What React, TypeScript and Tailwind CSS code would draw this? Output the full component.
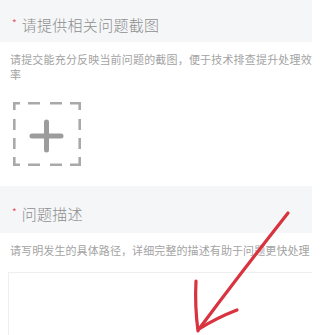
import React from "react";

const font = { fontFamily: '"Noto Sans CJK SC", "Noto Sans", sans-serif' };

function Header({ title, h, pt }: { title: string; h: string; pt: string }) {
  return (
    <div className={`${h} ${pt} bg-[#f5f6f8] flex items-center pl-[12px]`}>
      <span className="text-[#e0585c] text-[10px] leading-none mr-[5px] mt-[-3px]">*</span>
      <span className="text-[15px] leading-none text-[#8e8e8e] tracking-[0.3px] font-light">{title}</span>
    </div>
  );
}

export default function App() {
  return (
    <div className="relative w-[323px] h-[335px] bg-white overflow-hidden" style={font}>
      <div className="w-[312px] h-[335px] overflow-hidden flex flex-col">
        <Header title="请提供相关问题截图" h="h-[42px]" pt="pt-[6px]" />
        <div className="pt-[10px] pl-[10px] w-[314px] text-[11px] leading-[15px] text-[#a3a3a3] tracking-[0.18px]">
          请提交能充分反映当前问题的截图，便于技术排查提升处理效率
        </div>
        <div className="mt-[20px] ml-[13px] w-[68px] h-[64px]">
          <svg width="68" height="64" viewBox="0 0 68 64" fill="none" stroke="#a9a9a9" strokeWidth="2.6">
            <path d="M1.3 8 V1.3 H7" />
            <path d="M15 1.3 H27 M37 1.3 H49" />
            <path d="M57 1.3 H66.7 V8" />
            <path d="M1.3 17 V28 M1.3 36 V47" />
            <path d="M66.7 17 V28 M66.7 36 V47" />
            <path d="M1.3 55 V62.7 H7" />
            <path d="M15 62.7 H27 M37 62.7 H49" />
            <path d="M57 62.7 H66.7 V55" />
            <path d="M19 34 H48 M33.5 20 V48" stroke="#9c9c9c" strokeWidth="5" strokeLinecap="round" />
          </svg>
        </div>
        <div className="mt-[20px]">
          <Header title="问题描述" h="h-[47px]" pt="pt-[7px]" />
        </div>
        <div className="pt-[10px] pl-[10px] whitespace-nowrap text-[11px] leading-[15px] text-[#a3a3a3] tracking-[0.1px]">
          请写明发生的具体路径，详细完整的描述有助于问题更快处理
        </div>
        <div className="mt-[14px] ml-[8px] flex-1 border-[1.5px] border-[#efefef] border-r-0 border-b-0" />
      </div>
      <svg className="absolute left-0 top-0" width="323" height="335" viewBox="0 0 323 335" fill="none" stroke="#d8333f" strokeWidth="3.2" strokeLinecap="round" strokeLinejoin="round">
        <path d="M288 213 C262 246 228 290 199 329" />
        <path d="M196 281 C195 300 196 316 198 331" />
        <path d="M237 310 C224 315 210 322 199 329" />
      </svg>
    </div>
  );
}
